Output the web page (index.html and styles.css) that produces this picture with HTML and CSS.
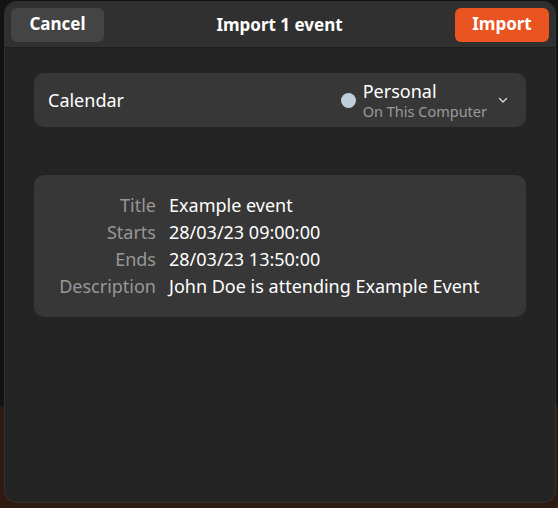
FILE: index.html
```html
<!DOCTYPE html>
<html>
<head>
<meta charset="utf-8">
<link rel="stylesheet" href="styles.css">
</head>
<body>
<div class="desktop">
  <div class="dialog">
    <header class="headerbar">
      <button class="btn btn-cancel">Cancel</button>
      <div class="title">Import 1 event</div>
      <button class="btn btn-import">Import</button>
    </header>
    <main class="content">
      <div class="card row-card">
        <span class="row-label">Calendar</span>
        <div class="cal-select">
          <span class="dot"></span>
          <div class="cal-text">
            <div class="cal-name">Personal</div>
            <div class="cal-sub">On This Computer</div>
          </div>
          <svg class="chevron" width="12" height="12" viewBox="0 0 12 12"><path d="M2.5 4.5 L6 8 L9.5 4.5" fill="none" stroke="#dcdcdc" stroke-width="1.3" stroke-linecap="round" stroke-linejoin="round"/></svg>
        </div>
      </div>
      <div class="card details">
        <div class="grid">
          <span class="k">Title</span><span class="v">Example event</span>
          <span class="k">Starts</span><span class="v">28/03/23 09:00:00</span>
          <span class="k">Ends</span><span class="v">28/03/23 13:50:00</span>
          <span class="k">Description</span><span class="v">John Doe is attending Example Event</span>
        </div>
      </div>
    </main>
  </div>
</div>
</body>
</html>
```
FILE: styles.css
```css
html, body {
  margin: 0;
  padding: 0;
  width: 558px;
  height: 508px;
  overflow: hidden;
}
.desktop {
  width: 558px;
  height: 508px;
  background: linear-gradient(to bottom, #131313 0, #131313 406px, #2f1a12 406px, #2f1a12 100%);
  padding: 2px 3px 6px 5px;
  box-sizing: border-box;
  font-family: "Noto Sans", "Open Sans", sans-serif;
}
.dialog {
  width: 550px;
  height: 500px;
  background: #242424;
  border-radius: 12px;
  box-shadow: 0 0 0 1px #303030;
  overflow: hidden;
  display: flex;
  flex-direction: column;
}
.headerbar {
  height: 45px;
  background: #303030;
  border-bottom: 1px solid #1e1e1e;
  display: flex;
  align-items: center;
  justify-content: space-between;
  padding: 0 6px;
  flex-shrink: 0;
}
.btn {
  font-family: inherit;
  font-weight: 700;
  font-size: 17px;
  line-height: 20px;
  color: #fff;
  border: none;
  border-radius: 6px;
  height: 34px;
  padding: 0 0 2px 0;
  width: 93px;
  margin-top: 1px;
}
.btn-cancel { background: #444444; }
.btn-import { background: #e95420; width: 94px; }
.title {
  color: #fff;
  font-weight: 700;
  font-size: 17px;
  margin-top: -1px;
}
.content {
  padding: 25px 29px 0 29px;
  display: flex;
  flex-direction: column;
  gap: 48px;
}
.card {
  background: #373737;
  border-radius: 10px;
}
.row-card {
  height: 54px;
  display: flex;
  align-items: center;
  justify-content: space-between;
  padding: 0 17px 0 14px;
}
.row-label {
  color: #fff;
  font-size: 18px;
}
.cal-select {
  display: flex;
  align-items: center;
}
.dot {
  width: 15px;
  height: 15px;
  border-radius: 50%;
  background: #c0cedb;
  margin-right: 7px;
  margin-top: 1px;
}
.cal-text {
  display: flex;
  flex-direction: column;
}
.cal-name {
  color: #fff;
  font-size: 18px;
  line-height: 22px;
}
.cal-sub {
  color: #9a9a9a;
  font-size: 14.5px;
  line-height: 18px;
}
.chevron {
  margin-left: 10px;
}
.details {
  height: 142px;
  display: flex;
  align-items: center;
}
.grid {
  display: grid;
  grid-template-columns: 122px auto;
  column-gap: 13px;
  margin-top: 0;
}
.k {
  color: #979797;
  font-size: 18px;
  line-height: 27px;
  text-align: right;
}
.v {
  color: #fff;
  font-size: 18px;
  line-height: 27px;
}
```
